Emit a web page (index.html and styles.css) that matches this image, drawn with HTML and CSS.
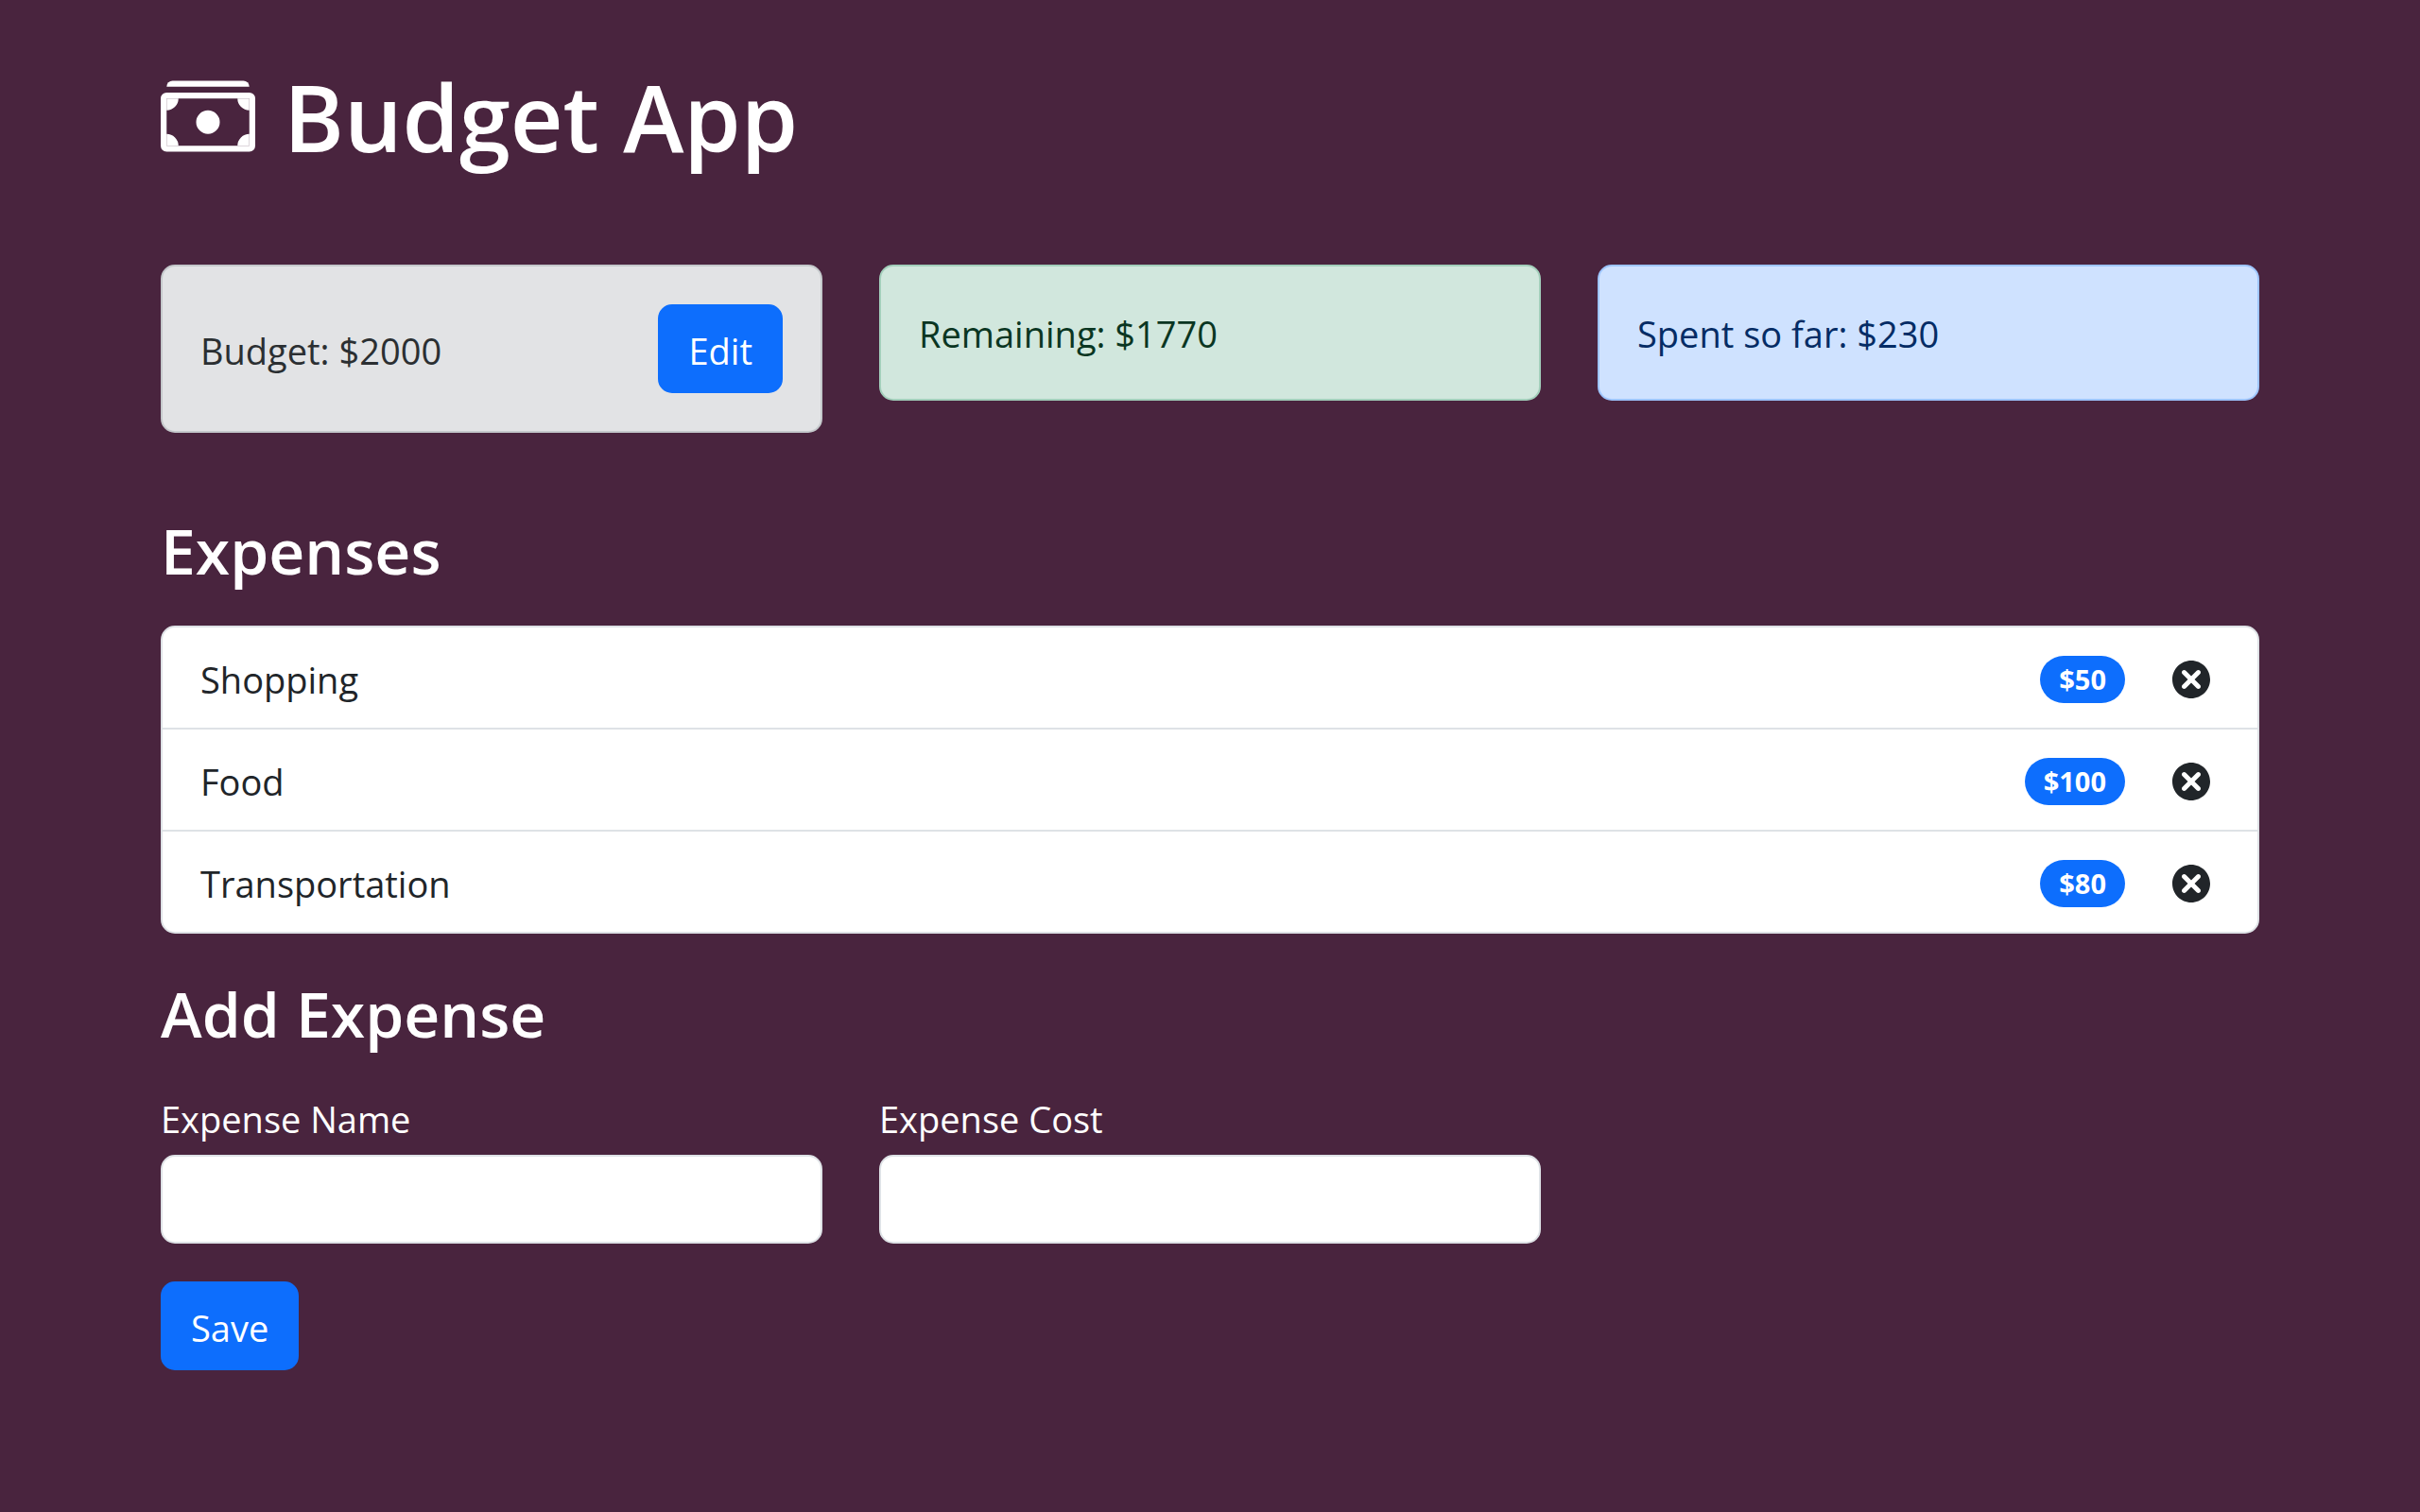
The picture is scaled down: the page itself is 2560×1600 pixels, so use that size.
FILE: index.html
```html
<!DOCTYPE html>
<html lang="en">
<head>
<meta charset="utf-8">
<meta name="viewport" content="width=device-width, initial-scale=1">
<title>Budget App</title>
<link rel="stylesheet" href="styles.css">
</head>
<body>
<svg class="sprite" aria-hidden="true">
  <symbol id="delete" viewBox="0 0 24 24"><path d="M12 4c-4.419 0-8 3.582-8 8s3.581 8 8 8 8-3.582 8-8-3.581-8-8-8zm3.707 10.293c.391.391.391 1.023 0 1.414-.195.195-.451.293-.707.293s-.512-.098-.707-.293l-2.293-2.293-2.293 2.293c-.195.195-.451.293-.707.293s-.512-.098-.707-.293c-.391-.391-.391-1.023 0-1.414l2.293-2.293-2.293-2.293c-.391-.391-.391-1.023 0-1.414s1.023-.391 1.414 0l2.293 2.293 2.293-2.293c.391-.391 1.023-.391 1.414 0s.391 1.023 0 1.414l-2.293 2.293 2.293 2.293z"/></symbol>
</svg>
<main class="container">
  <h1 class="title">
    <svg class="title-icon" viewBox="0 0 16 16" fill="currentColor" aria-hidden="true">
      <path d="M14 3H1a1 1 0 0 1 1-1h12a1 1 0 0 1 1 1h-1z"/>
      <path fill-rule="evenodd" d="M15 5H1v8h14V5zM1 4a1 1 0 0 0-1 1v8a1 1 0 0 0 1 1h14a1 1 0 0 0 1-1V5a1 1 0 0 0-1-1H1z"/>
      <path d="M13 5a2 2 0 0 0 2 2V5h-2zM3 5a2 2 0 0 1-2 2V5h2zm10 8a2 2 0 0 1 2-2v2h-2zM3 13a2 2 0 0 0-2-2v2h2zm7-4a2 2 0 1 1-4 0 2 2 0 0 1 4 0z"/>
    </svg>
    <span>Budget App</span>
  </h1>

  <section class="grid summary" aria-label="Summary">
    <div class="alert alert-budget">
      <span>Budget: $2000</span>
      <button class="btn" type="button">Edit</button>
    </div>
    <div class="alert alert-remaining"><span>Remaining: $1770</span></div>
    <div class="alert alert-spent"><span>Spent so far: $230</span></div>
  </section>

  <h2 class="heading">Expenses</h2>
  <ul class="expenses">
    <li class="expense">
      <span class="expense-name">Shopping</span>
      <span class="badge">$50</span>
      <button class="remove" type="button" aria-label="Delete Shopping"><svg class="remove-icon"><use href="#delete"/></svg></button>
    </li>
    <li class="expense">
      <span class="expense-name">Food</span>
      <span class="badge">$100</span>
      <button class="remove" type="button" aria-label="Delete Food"><svg class="remove-icon"><use href="#delete"/></svg></button>
    </li>
    <li class="expense">
      <span class="expense-name">Transportation</span>
      <span class="badge">$80</span>
      <button class="remove" type="button" aria-label="Delete Transportation"><svg class="remove-icon"><use href="#delete"/></svg></button>
    </li>
  </ul>

  <h2 class="heading">Add Expense</h2>
  <form class="form">
    <div class="grid">
      <div class="field">
        <label for="name">Expense Name</label>
        <input class="input" id="name" type="text" required>
      </div>
      <div class="field">
        <label for="cost">Expense Cost</label>
        <input class="input" id="cost" type="text" required>
      </div>
    </div>
    <button class="btn btn-save" type="submit">Save</button>
  </form>
</main>
</body>
</html>
```
FILE: styles.css
```css
* {
  box-sizing: border-box;
}

body {
  margin: 0;
  min-height: 100vh;
  background: #49243e;
  color: #fff;
  font: 400 38px/60px "Open Sans", "Noto Sans", sans-serif;
}

.sprite {
  display: none;
}

.container {
  padding: 63px 170px 60px;
}

.title {
  display: flex;
  align-items: center;
  gap: 30px;
  margin: 0 0 97px;
  font-size: 97px;
  font-weight: 600;
  line-height: 120px;
}

.title-icon {
  width: 100px;
  height: 100px;
}

.grid {
  display: grid;
  grid-template-columns: repeat(3, 1fr);
  gap: 60px;
  align-items: start;
}

.summary {
  margin-bottom: 82px;
}

.alert {
  display: flex;
  align-items: baseline;
  justify-content: space-between;
  padding: 41px 40px 39px;
  border: 2px solid;
  border-radius: 15px;
}

.alert-budget {
  padding: 40px;
  background: #e2e3e5;
  border-color: #c4c8cb;
  color: #2b2f32;
}

.alert-remaining {
  background: #d1e7dd;
  border-color: #a3cfbb;
  color: #0a3622;
}

.alert-spent {
  background: #cfe2ff;
  border-color: #9ec5fe;
  color: #052c65;
}

.btn {
  padding: 17px 30px 13px;
  border: 2px solid #0d6efd;
  border-radius: 15px;
  background: #0d6efd;
  color: #fff;
  font: inherit;
  cursor: pointer;
}

.heading {
  margin: 0 0 38px;
  font-size: 66px;
  font-weight: 600;
  line-height: 84px;
}

.expenses {
  margin: 0 0 42px;
  padding: 0;
  list-style: none;
  border: 2px solid #dee2e6;
  border-radius: 15px;
  background: #fff;
  color: #212529;
}

.expense {
  display: flex;
  align-items: center;
  gap: 40px;
  padding: 24px 40px 20px;
  min-height: 106px;
}

.expense + .expense {
  min-height: 108px;
  border-top: 2px solid #dee2e6;
}

.expense-name {
  flex: 1;
}

.badge {
  padding: 10px 20px;
  border-radius: 25px;
  background: #0d6efd;
  color: #fff;
  font-size: 29px;
  font-weight: 700;
  line-height: 30px;
}

.remove {
  display: flex;
  padding: 0;
  border: 0;
  background: none;
  color: inherit;
  cursor: pointer;
}

.remove-icon {
  width: 60px;
  height: 60px;
  fill: currentColor;
}

.form {
  padding-top: 2px;
}

.field {
  display: flex;
  flex-direction: column;
  gap: 8px;
}

.input {
  width: 100%;
  height: 94px;
  padding: 15px 30px;
  border: 2px solid #dee2e6;
  border-radius: 15px;
  background: #fff;
  color: #212529;
  font: inherit;
}

.btn-save {
  margin-top: 40px;
}
```
